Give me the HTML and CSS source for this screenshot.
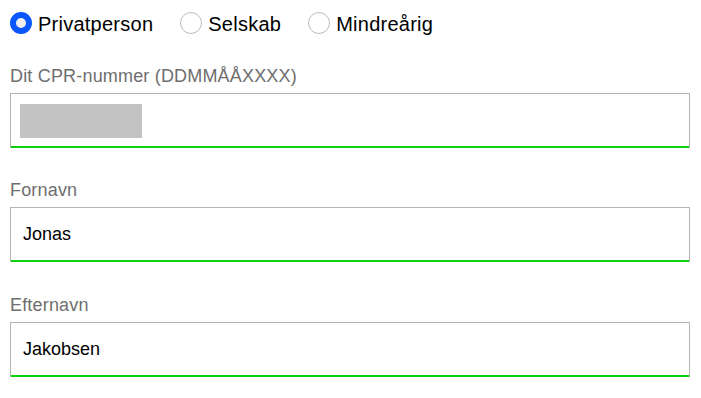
FILE: index.html
```html
<!DOCTYPE html>
<html lang="da">
<head>
<meta charset="utf-8">
<link rel="stylesheet" href="styles.css">
</head>
<body>
<form class="form">
  <div class="radios">
    <label class="radio">
      <span class="dot dot-on"></span>
      <span class="radio-text">Privatperson</span>
    </label>
    <label class="radio">
      <span class="dot"></span>
      <span class="radio-text">Selskab</span>
    </label>
    <label class="radio">
      <span class="dot"></span>
      <span class="radio-text">Mindreårig</span>
    </label>
  </div>
  <div class="field field-first">
    <div class="label">Dit CPR-nummer (DDMMÅÅXXXX)</div>
    <div class="input"><span class="masked"></span></div>
  </div>
  <div class="field">
    <div class="label">Fornavn</div>
    <div class="input">Jonas</div>
  </div>
  <div class="field field-last">
    <div class="label">Efternavn</div>
    <div class="input">Jakobsen</div>
  </div>
</form>
</body>
</html>
```
FILE: styles.css
```css
html, body {
  margin: 0;
  padding: 0;
  background: #ffffff;
}
body {
  font-family: "Liberation Sans", Arial, sans-serif;
  color: #000000;
}
.form {
  padding: 12px 11px 0 10px;
}
.radios {
  display: flex;
  gap: 27px;
  height: 24px;
}
.radio {
  display: flex;
  align-items: flex-start;
  gap: 6px;
  font-size: 20px;
  line-height: 24px;
  letter-spacing: 0.25px;
}
.dot {
  width: 22px;
  height: 22px;
  box-sizing: border-box;
  border-radius: 50%;
  border: 1px solid #bdbdbd;
  background: #ffffff;
  flex: none;
}
.dot-on {
  border: 6px solid #0a57ff;
  background: #efefef;
}
.field {
  margin-top: 31px;
}
.field-first {
  margin-top: 29px;
}
.field-last {
  margin-top: 32px;
}
.label {
  font-size: 18px;
  line-height: 22px;
  color: #6e6e6e;
  margin-bottom: 6px;
  letter-spacing: 0.18px;
}
.input {
  box-sizing: border-box;
  height: 55px;
  border: 1px solid #b4b4b4;
  border-bottom: 0;
  padding: 0 12px 1px 12px;
  display: flex;
  align-items: center;
  font-size: 18px;
  color: #000000;
  background-image: linear-gradient(#0fd00f, #0fd00f);
  background-repeat: no-repeat;
  background-size: 100% 2px;
  background-position: left bottom;
}
.masked {
  display: block;
  width: 122px;
  height: 34px;
  margin-left: -3px;
  margin-top: 1px;
  background: #c3c3c3;
}
```
